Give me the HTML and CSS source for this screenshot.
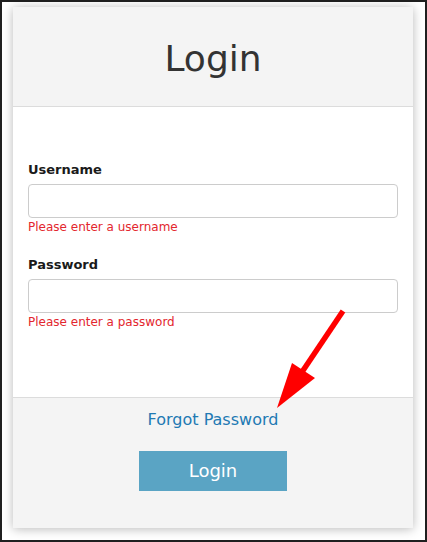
FILE: index.html
```html
<!DOCTYPE html>
<html lang="en">
<head>
<meta charset="utf-8">
<title>Login</title>
<link rel="stylesheet" href="styles.css">
</head>
<body>
<div class="frame">
  <div class="card">
    <div class="card-header">
      <h1 class="title">Login</h1>
    </div>
    <div class="card-body">
      <div class="field">
        <label class="label" for="username">Username</label>
        <input class="input" id="username" type="text">
        <div class="error">Please enter a username</div>
      </div>
      <div class="field">
        <label class="label" for="password">Password</label>
        <input class="input" id="password" type="password">
        <div class="error">Please enter a password</div>
      </div>
    </div>
    <div class="card-footer">
      <a class="forgot" href="#">Forgot Password</a>
      <button class="btn" type="button">Login</button>
    </div>
  </div>
</div>
<svg class="arrow" width="427" height="542" viewBox="0 0 427 542" aria-hidden="true">
  <line x1="343" y1="311" x2="302" y2="372" stroke="#ff0000" stroke-width="5.5"/>
  <polygon points="292,363 315,378 277,408" fill="#ff0000"/>
</svg>
</body>
</html>
```

FILE: styles.css
```css
html, body {
  margin: 0;
  padding: 0;
  background: #ffffff;
}

body {
  position: relative;
  width: 427px;
  height: 542px;
  font-family: "DejaVu Sans", "Liberation Sans", sans-serif;
}

.frame {
  box-sizing: border-box;
  width: 427px;
  height: 542px;
  border: 2px solid #1f1f1f;
  padding: 5px 0 0 11px;
  background: #ffffff;
}

.card {
  width: 400px;
  height: 521px;
  display: flex;
  flex-direction: column;
  box-shadow: 0 1px 10px rgba(0, 0, 0, 0.28);
  background: #ffffff;
}

.card-header {
  background: #f4f4f4;
  border-bottom: 1px solid #dcdcdc;
  padding: 31px 0 26px;
  text-align: center;
}

.title {
  margin: 0;
  font-size: 36px;
  line-height: 42px;
  font-weight: normal;
  color: #333333;
}

.card-body {
  padding: 55px 15px 0;
  height: 235px;
  display: flex;
  flex-direction: column;
  gap: 22px;
}

.field {
  display: flex;
  flex-direction: column;
}

.label {
  font-size: 13px;
  line-height: 16px;
  font-weight: bold;
  color: #1a1a1a;
  margin-bottom: 6px;
}

.input {
  box-sizing: border-box;
  width: 370px;
  height: 34px;
  border: 1px solid #cccccc;
  border-radius: 4px;
  background: #ffffff;
  margin: 0;
  padding: 0 8px;
  font: inherit;
}

.error {
  margin-top: 2px;
  font-size: 12px;
  line-height: 15px;
  color: #e3262e;
}

.card-footer {
  flex: 1;
  background: #f4f4f4;
  border-top: 1px solid #dcdcdc;
  padding-top: 12px;
  display: flex;
  flex-direction: column;
  align-items: center;
}

.forgot {
  font-size: 16px;
  line-height: 20px;
  color: #2179b3;
  text-decoration: none;
}

.btn {
  margin-top: 21px;
  width: 148px;
  height: 40px;
  border: none;
  border-radius: 0;
  background: #5aa4c4;
  color: #ffffff;
  font-family: "DejaVu Sans", "Liberation Sans", sans-serif;
  font-size: 18px;
  line-height: 22px;
  padding: 0;
  display: flex;
  align-items: center;
  justify-content: center;
}

.arrow {
  position: absolute;
  left: 0;
  top: 0;
  pointer-events: none;
}
```
